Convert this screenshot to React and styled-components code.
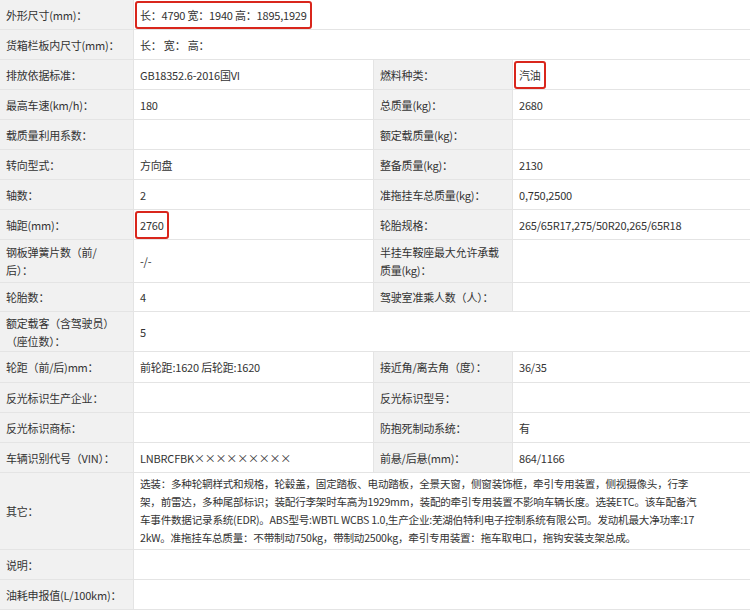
import React from "react";
import styled, { createGlobalStyle } from "styled-components";

const G = createGlobalStyle`
  body { margin: 0; background: #fff; }
`;
const Table = styled.div`
  display: grid;
  grid-template-columns: 133px 239px 138px 240px;
  width: 750px;
  font-family: "Noto Sans CJK SC", "Noto Sans", sans-serif;
  font-size: 11px;
  letter-spacing: -0.2px;
  color: #333;
  background: #e4e4e4;
  gap: 1px;
  border-bottom: 1px solid #e4e4e4;
  box-sizing: border-box;
`;
const Cell = styled.div`
  background: ${p => (p.$label ? "#f1f1f1" : "#fff")};
  grid-column: ${p => (p.$span ? `span ${p.$span}` : "auto")};
  height: ${p => p.$h - 1}px;
  display: flex;
  align-items: center;
  padding: 0 6px;
  line-height: ${p => (p.$lh ? p.$lh : 18)}px;
  white-space: nowrap;
  box-sizing: border-box;
  overflow: hidden;
`;
const Para = styled.div`
  font-size: 10.6px;
  letter-spacing: -0.25px;
  line-height: 18px;
`;
const Mark = styled.span`
  border: 2px solid #d9261c;
  border-radius: 3px;
  padding: 3px 3px;
  margin-left: -5px;
`;
const rows = [
  [30, "外形尺寸(mm)：", <Mark>长：4790 宽：1940 高：1895,1929</Mark>],
  [30, "货箱栏板内尺寸(mm)：", "长： 宽： 高："],
  [30, "排放依据标准：", "GB18352.6-2016国VI", "燃料种类：", <Mark>汽油</Mark>],
  [30, "最高车速(km/h)：", "180", "总质量(kg)：", "2680"],
  [30, "载质量利用系数：", "", "额定载质量(kg)：", ""],
  [30, "转向型式：", "方向盘", "整备质量(kg)：", "2130"],
  [30, "轴数：", "2", "准拖挂车总质量(kg)：", "0,750,2500"],
  [30, "轴距(mm)：", <Mark>2760</Mark>, "轮胎规格：", "265/65R17,275/50R20,265/65R18"],
  [43, <span>钢板弹簧片数（前/<br />后）：</span>, "-/-", <span>半挂车鞍座最大允许承载<br />质量(kg)：</span>, ""],
  [29, "轮胎数：", "4", "驾驶室准乘人数（人）：", ""],
  [40, <span>额定载客（含驾驶员）<br />（座位数）：</span>, "5"],
  [31, "轮距（前/后)mm：", "前轮距:1620 后轮距:1620", "接近角/离去角（度）：", "36/35"],
  [30, "反光标识生产企业：", "", "反光标识型号：", ""],
  [30, "反光标识商标：", "", "防抱死制动系统：", "有"],
  [30, "车辆识别代号（VIN）：", "LNBRCFBK×××××××××", "前悬/后悬(mm)：", "864/1166"],
  [77, "其它：", <Para>选装：多种轮辋样式和规格，轮毂盖，固定踏板、电动踏板，全景天窗，侧窗装饰框，牵引专用装置，侧视摄像头，行李<br />架，前雷达，多种尾部标识；装配行李架时车高为1929mm，装配的牵引专用装置不影响车辆长度。选装ETC。该车配备汽<br />车事件数据记录系统(EDR)。ABS型号:WBTL WCBS 1.0,生产企业:芜湖伯特利电子控制系统有限公司。发动机最大净功率:17<br />2kW。准拖挂车总质量：不带制动750kg，带制动2500kg，牵引专用装置：拖车取电口，拖钩安装支架总成。</Para>],
  [30, "说明：", ""],
  [30, "油耗申报值(L/100km)：", ""],
];
export default function App() {
  return (
    <>
      <G />
      <Table>
        {rows.map((r, i) => {
          const [h, ...c] = r;
          if (c.length === 2)
            return (
              <React.Fragment key={i}>
                <Cell $label $h={h}>{c[0]}</Cell>
                <Cell $h={h} $span={3}>{c[1]}</Cell>
              </React.Fragment>
            );
          return (
            <React.Fragment key={i}>
              {c.map((t, j) => (
                <Cell key={j} $h={h} $label={j % 2 === 0}>{t}</Cell>
              ))}
            </React.Fragment>
          );
        })}
      </Table>
    </>
  );
}
